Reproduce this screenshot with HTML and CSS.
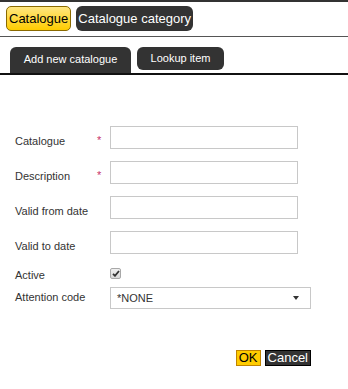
FILE: index.html
```html
<!DOCTYPE html>
<html lang="en">
<head>
  <meta charset="UTF-8" />
  <title>Catalogue</title>
  <link rel="stylesheet" href="styles.css">
</head>
<body>
  <div class="topbar">
    <button class="top-btn active">Catalogue</button>
    <button class="top-btn">Catalogue category</button>
  </div>

  <div class="tabs">
    <div class="tab current">Add new catalogue</div>
    <div class="tab">Lookup item</div>
  </div>

  <form class="form">
    <div class="row">
      <label class="label">Catalogue</label>
      <span class="req">*</span>
      <input class="field" type="text" />
    </div>
    <div class="row">
      <label class="label">Description</label>
      <span class="req">*</span>
      <input class="field" type="text" />
    </div>
    <div class="row">
      <label class="label">Valid from date</label>
      <span class="req"></span>
      <input class="field" type="text" />
    </div>
    <div class="row">
      <label class="label">Valid to date</label>
      <span class="req"></span>
      <input class="field" type="text" />
    </div>
    <div class="row check-row">
      <label class="label">Active</label>
      <span class="req"></span>
      <span class="checkbox">
        <svg width="8" height="7" viewBox="0 0 8 7"><path d="M1 3.8 L3 5.8 L7 1" fill="none" stroke="#333" stroke-width="1.8"/></svg>
      </span>
    </div>
    <div class="row select-row">
      <label class="label">Attention code</label>
      <span class="req"></span>
      <div class="select">
        <span>*NONE</span>
        <svg width="6" height="4" viewBox="0 0 6 4"><path d="M0 0 H6 L3 4 Z" fill="#333"/></svg>
      </div>
    </div>

    <div class="actions">
      <button type="button" class="ok">OK</button>
      <button type="button" class="cancel">Cancel</button>
    </div>
  </form>
</body>
</html>
```

FILE: styles.css
```css
* {
  box-sizing: border-box;
  margin: 0;
  padding: 0;
}

body {
  font-family: "Liberation Sans", Arial, sans-serif;
  color: #333;
  background: #fff;
}

.topbar {
  display: flex;
  gap: 5px;
  border-top: 2px solid #333;
  border-bottom: 1px solid #555;
  padding: 4px 6px 5px;
}

.top-btn {
  height: 25px;
  font-family: inherit;
  font-size: 13px;
  padding: 0 2px;
  border: none;
  border-radius: 6px;
  background: #333;
  color: #fff;
}

.top-btn.active {
  background: linear-gradient(#ffe680, #ffcc00);
  border: 1px solid #8a6a00;
  border-radius: 5px;
  color: #000;
}

.tabs {
  display: flex;
  align-items: flex-start;
  gap: 6px;
  margin-top: 10px;
  padding-left: 10px;
  border-bottom: 2px solid #111;
}

.tab {
  height: 23px;
  line-height: 23px;
  width: 87px;
  text-align: center;
  font-size: 11px;
  background: #333;
  color: #fff;
  border-radius: 6px;
}

.tab.current {
  height: 26px;
  line-height: 25px;
  width: 121px;
  border-radius: 6px 6px 0 0;
}

.form {
  padding: 51px 0 0 15px;
}

.row {
  display: flex;
  align-items: flex-start;
  height: 23px;
  margin-bottom: 12px;
  font-size: 11px;
}

.label {
  width: 82px;
  line-height: 13px;
  padding-top: 9px;
}

.req {
  width: 13px;
  line-height: 13px;
  padding-top: 8px;
  color: #c8336a;
}

.field {
  width: 188px;
  height: 23px;
  border: 1px solid #c8c8c8;
  background: #fff;
}

.check-row {
  height: 14px;
  margin-bottom: 7px;
  align-items: center;
}

.check-row .label {
  padding-top: 4px;
}

.checkbox {
  width: 11px;
  height: 11px;
  margin-top: 1px;
  border: 1px solid #a8a8a8;
  border-radius: 2px;
  background: linear-gradient(#f0f0f0, #d8d8d8);
  display: flex;
  align-items: center;
  justify-content: center;
}

.select-row {
  height: 22px;
}

.select-row .label {
  padding-top: 4px;
}

.select {
  width: 201px;
  height: 22px;
  border: 1px solid #c8c8c8;
  display: flex;
  align-items: center;
  justify-content: space-between;
  padding: 0 11px 0 6px;
  color: #333;
}

.actions {
  display: flex;
  justify-content: flex-end;
  gap: 4px;
  margin-top: 41px;
  padding-right: 37px;
}

.actions button {
  font-family: inherit;
  font-size: 13px;
  line-height: 14px;
  height: 16px;
  padding: 0 2px;
}

.ok {
  background: #ffcc00;
  border: 1px solid #c08400;
  color: #000;
}

.cancel {
  background: #333;
  border: 1px solid #000;
  color: #fff;
  padding: 0 1px;
}
```
